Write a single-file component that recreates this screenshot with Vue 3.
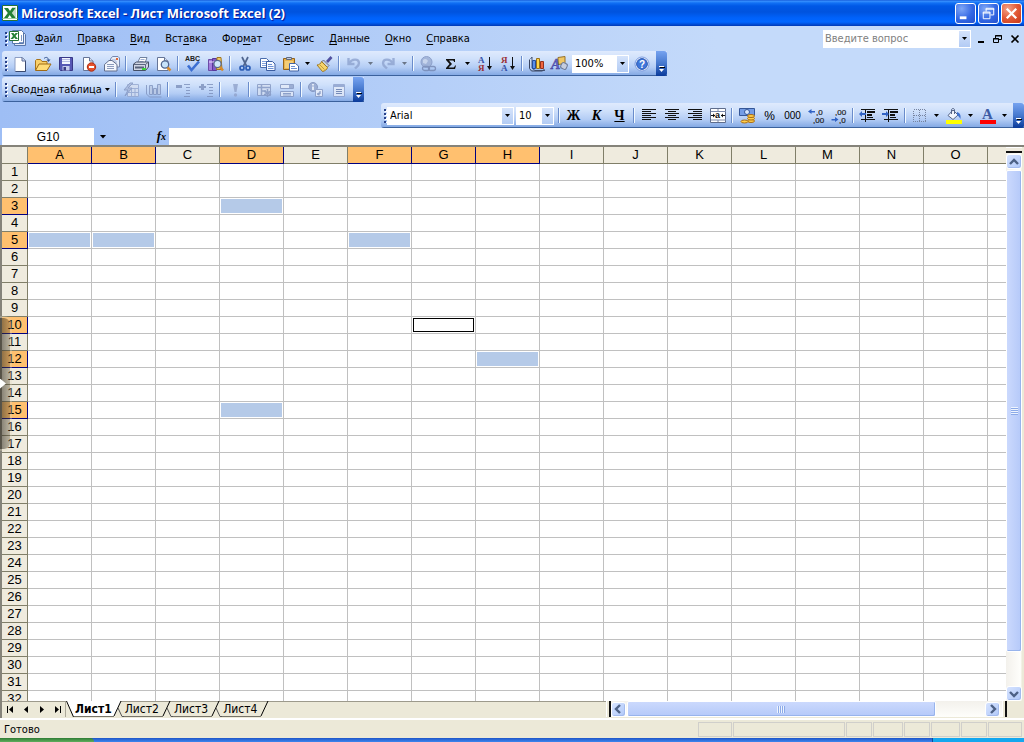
<script setup>
import { ref } from 'vue'

const icons = {
  page: '<path d="M3 1.500h7l3.500 3.500v10.500H3z" fill="#fff" stroke="#8d9ec4"/><path d="M10 1.500l3.500 3.500v10.500H3.500" fill="none" stroke="#39496f"/><path d="M10 1.500V5h3.500" fill="#cdd9f2" stroke="#5c6d98"/>',
  open: '<path d="M0.500 14V4.500l1-1h4l1.500 2h5V8" fill="#f8d06a" stroke="#a8741c"/><path d="M0.500 14.500L4 8h12l-4 6.500z" fill="#ffdc78" stroke="#a06a14"/><path d="M9 2.500c2-2 4-1 4.500 1" fill="none" stroke="#33528e"/><path d="M11.500 3.500h4L13.500 6z" fill="#33528e"/>',
  save: '<path d="M1.500 1.500h13v13h-12l-1-1z" fill="#5657b4" stroke="#383887"/><path d="M4 2h8v6H4z" fill="#f2f4ff"/><path d="M4 3.500h8M4 5.500h8" stroke="#b5bce3"/><path d="M4.500 10h7v4.500h-7z" fill="#c4cbec"/><path d="M5.500 11h2.500v3.500H5.500z" fill="#393b84"/>',
  perm: '<path d="M2.500 1.500h6l3.500 3.500v9.500H2.500z" fill="#fff" stroke="#667597"/><path d="M8.500 1.500V5H12" fill="#d7e1f4" stroke="#667597"/><circle cx="10.500" cy="11" r="4.200" fill="#e5502c" stroke="#a92c12"/><path d="M8 10h5v2H8z" fill="#fff"/>',
  mail: '<path d="M6.500 7V3l2-2.500h5.500l1.500 1.500v9h-9" fill="#e8eef9" stroke="#7587af"/><path d="M8 4h4M8 6h5" stroke="#9baed4"/><path d="M12 2h2v2h-2z" fill="#e36432"/><path d="M0.500 8.500L5 4.500h3l5 4v6.500H.5z" fill="#f4f7fd" stroke="#626f8d"/><path d="M3 8.500h7M3 10.500h7M3 12.500h7" stroke="#8d9cbd"/>',
  print: '<path d="M4.500 7L7 1.500h7L12 7" fill="#fff" stroke="#71829f"/><path d="M7.500 3.500h4M6.500 5.500h4" stroke="#9fb0d2"/><path d="M0.500 8l3-2h12v5l-3 3.500H.5z" fill="#d0d6e4" stroke="#454f65"/><path d="M.5 8.500h12l3-2.500M12.500 8.500v6" fill="none" stroke="#5c667e"/><path d="M2 11.500h9" stroke="#58637b" stroke-width="2"/><path d="M9 12h4v2H9z" fill="#3ad43a"/>',
  preview: '<path d="M1.500 1.500h7l3.500 3.500v9.500H1.500z" fill="#fff" stroke="#667597"/><path d="M8.500 1.500V5H12" fill="#d7e1f4" stroke="#667597"/><circle cx="9" cy="8.500" r="3.700" fill="#c7e3fa" stroke="#50658e" stroke-width="1.300"/><path d="M11.500 11.500l3 3" stroke="#d98c2c" stroke-width="2.500"/>',
  spell: '<text x="0" y="5" font-size="7" font-family="Liberation Sans" font-weight="bold" fill="#222">ABC</text><path d="M3 9.500l3.500 4.500L14 5.500" fill="none" stroke="#3c6fd2" stroke-width="2.600"/>',
  research: '<path d="M.5 3.500h4v11h-4z" fill="#a37cdb" stroke="#6c4ba7"/><path d="M4.500 2.500h4v12h-4z" fill="#8458c8" stroke="#57379a"/><path d="M1 6h7" stroke="#eadfff"/><path d="M9 1.500h4l1 12H8.500z" fill="#f0cb62" stroke="#9f7624"/><circle cx="9.500" cy="8" r="3.600" fill="#cfe7fb" stroke="#56698d" stroke-width="1.200"/><path d="M12 11l3 3.500" stroke="#d98c2c" stroke-width="2.500"/>',
  cut: '<path d="M5 1l4.500 9M11 1L6.500 10" stroke="#51668f" stroke-width="1.700" fill="none"/><circle cx="5" cy="12" r="2" fill="none" stroke="#2c5db5" stroke-width="1.700"/><circle cx="11" cy="12" r="2" fill="none" stroke="#2c5db5" stroke-width="1.700"/>',
  copy: '<path d="M.5 2.500h6l2.500 2.500v6.500H.5z" fill="#fff" stroke="#4a6dad"/><path d="M2 5.500h5M2 7.500h4M2 9.500h4" stroke="#7fa0dc"/><path d="M6.500 5.500h6l2.500 2.500v6.500H6.500z" fill="#f7faff" stroke="#3a5da1"/><path d="M8 8.500h4M8 10.500h5.500M8 12.500h5.500" stroke="#6b90d4"/>',
  paste: '<path d="M.5 2.500h11v11H.5z" fill="#eab44c" stroke="#94631b"/><path d="M3.500 3.500v-2h5v2z" fill="#c7cdd9" stroke="#606b80"/><path d="M2 5h8v7H2z" fill="#f3cd78"/><path d="M6.500 7.500h6l3 2.500v5h-9z" fill="#fff" stroke="#4264a5"/><path d="M8 10.500h4M8 12.500h6" stroke="#6b90d4"/>',
  brush: '<path d="M10 6L14.500 1" stroke="#50509f" stroke-width="2.700"/><path d="M6.500 4l5.500 5.500-2 2L4.500 6z" fill="#c6cede" stroke="#69718a"/><path d="M4.500 5.500l6 6c-.5 2-2.500 3.500-5 4L0 9c2 0 4-1.500 4.500-3.500z" fill="#f4d36b" stroke="#a07922"/><path d="M3 9l4.500 4.500" stroke="#c79b36"/>',
  undo: '<path d="M2.500 2v6h6" fill="none" stroke="#8ea3cf" stroke-width="2.400"/><path d="M3.500 7c2-4 9-5 9.500 0 0 3-2 3.500-4 5.500" fill="none" stroke="#8ea3cf" stroke-width="2.400"/>',
  redo: '<path d="M13.500 2v6h-6" fill="none" stroke="#8ea3cf" stroke-width="2.400"/><path d="M12.500 7c-2-4-9-5-9.500 0 0 3 2 3.500 4 5.500" fill="none" stroke="#8ea3cf" stroke-width="2.400"/>',
  link: '<circle cx="6.500" cy="6" r="5.500" fill="#9aacd2" stroke="#7f92bf"/><path d="M3 4c2-2 4-1 5 1l-2 3-3-1z" fill="#c8d4ea"/><rect x="2.500" y="10.500" width="7" height="4" rx="2" fill="none" stroke="#7486b1" stroke-width="1.300"/><rect x="8.500" y="10.500" width="7" height="4" rx="2" fill="none" stroke="#7486b1" stroke-width="1.300"/>',
  sum: '<path d="M3 3h9v3h-1c0-1-.5-1.500-1.500-1.500H6L9 8l-3.500 3.500h4.500c1 0 1.500-.5 2-2h1L12 13H3v-1L6.500 8 3 4z" fill="#111"/>',
  asc: '<text x="1" y="7" font-size="9" font-family="Liberation Serif" font-weight="bold" fill="#3552a8">А</text><text x="1" y="15" font-size="9" font-family="Liberation Serif" font-weight="bold" fill="#9c2f35">Я</text><path d="M12.500 1v12" stroke="#111"/><path d="M10 10h5L12.500 14z" fill="#111"/>',
  desc: '<text x="1" y="7" font-size="9" font-family="Liberation Serif" font-weight="bold" fill="#9c2f35">Я</text><text x="1" y="15" font-size="9" font-family="Liberation Serif" font-weight="bold" fill="#3552a8">А</text><path d="M12.500 1v12" stroke="#111"/><path d="M10 10h5L12.500 14z" fill="#111"/>',
  chart: '<path d="M1.500 3l1.500-2v11l3 2.500h10" fill="none" stroke="#4a5878"/><path d="M.5 3.500v9l2 2.500h11l2-2" fill="none" stroke="#38445f"/><path d="M3.500 4.500h3v8h-3z" fill="#5a8ee8" stroke="#244e9d"/><path d="M7.500 2.500h3v10h-3z" fill="#ffd648" stroke="#98701a"/><path d="M11.500 5.500h3v7h-3z" fill="#ee6540" stroke="#96301c"/>',
  draw: '<path d="M6 1.500l7-1v7l-7 1z" fill="#f0c765" stroke="#96712b"/><text x="-1" y="13" font-size="14" font-style="italic" font-family="Liberation Serif" font-weight="bold" fill="#6262c6" stroke="#3a3a91" stroke-width=".4">A</text><rect x="9" y="7" width="6" height="6" rx="2" transform="rotate(25 12 10)" fill="#c5cddf" stroke="#6b7896"/>',
  help: '<circle cx="8" cy="8" r="7" fill="#fff" stroke="#7a9be0"/><circle cx="8" cy="8" r="5.400" fill="#3f76d9" stroke="#2857b4"/><text x="5" y="12" font-size="10" font-family="Liberation Sans" font-weight="bold" fill="#fff">?</text>',
  format: '<g fill="none" stroke="#95a7cf"><path d="M4.500 2.500h11v12h-11z" fill="#d5def0"/><path d="M5 6.500h10M5 10.500h10M8.500 6v8M12 6v8"/></g><path d="M7 1L1 8h4l-3 6 7-8H5l5-5z" fill="#a8b7d9" stroke="#8092bd"/>',
  chartGray: '<g fill="#bac8e3" stroke="#7f92bd"><path d="M.5 3v9l3 3h12" fill="none"/><path d="M3.500 3.500h3v9h-3zM7.500 6.500h3v6h-3zM11.500 2.500h3v10h-3z"/></g>',
  hide: '<g shape-rendering="crispEdges" fill="#7d90bb"><path d="M1 3h6v3H1zM9 2h6v1H9zM11 5h4v1h-4zM11 8h4v1h-4zM11 11h4v1h-4zM9 14h6v1H9z"/></g>',
  show: '<g shape-rendering="crispEdges" fill="#7d90bb"><path d="M1 4h7v2H1zM3 2h3v6H3zM9 2h6v1H9zM11 5h4v1h-4zM11 8h4v1h-4zM11 11h4v1h-4zM9 14h6v1H9z"/></g>',
  bang: '<path d="M6 2h5L9.500 10h-2z" fill="#91a3cb"/><circle cx="8.500" cy="13" r="1.700" fill="#91a3cb"/>',
  pivot: '<g fill="none" stroke="#8396c0"><path d="M1.500 2.500h13v11h-13z" fill="#d7e1f2"/><path d="M1 5.500h14M5.500 3v11M6 9h4" stroke-width="1.500"/><path d="M11.500 7v8M8 9l7 4M15 9l-7 4" stroke-width="1.600"/></g>',
  fields: '<path d="M1.500 2.500h13v4h-13zM1.500 9.500h13v5h-13z" fill="#e6ecf8" stroke="#8294bf"/><path d="M10 3h4v3h-4z" fill="#91a3cb"/><path d="M4 11.500h8M4 13h8" stroke="#8294bf"/>',
  info: '<circle cx="5" cy="5" r="4.500" fill="#91a3cb" stroke="#7789b5"/><path d="M5 2v1.500M5 4.500V8" stroke="#fff" stroke-width="1.600"/><path d="M7.500 7.500h7v7h-7z" fill="#edf1fa" stroke="#8798c1"/><path d="M12 9v3H9.500m1.500-1.500L9.500 12l1.500 1.500" fill="none" stroke="#667bab"/>',
  list: '<path d="M2.500 2.500h11v12h-11z" fill="#e6ecf8" stroke="#8da0cb"/><path d="M3 4h10" stroke="#8da0cb" stroke-width="2"/><path d="M5 7.500h6M5 9.500h6M5 11.500h6" stroke="#667aa8"/>',
  left: '<path shape-rendering="crispEdges" fill="#111" d="M1 1h14v1H1zM1 3h9v1H1zM1 5h14v1H1zM1 7h9v1H1zM1 9h14v1H1zM1 11h9v1H1z"/>',
  center: '<path shape-rendering="crispEdges" fill="#111" d="M1 1h14v1H1zM4 3h8v1H4zM1 5h14v1H1zM4 7h8v1H4zM1 9h14v1H1zM4 11h8v1H4z"/>',
  right: '<path shape-rendering="crispEdges" fill="#111" d="M1 1h14v1H1zM6 3h9v1H6zM1 5h14v1H1zM6 7h9v1H6zM1 9h14v1H1zM6 11h9v1H6z"/>',
  merge: '<path d="M.5.5h15v14H.5z" fill="#fff" stroke="#5f6d8c"/><path d="M1 3.500h15M1 12h15M8 1v2M8 12v2" stroke="#7c8aaa"/><text x="5" y="10" font-size="9" font-family="Liberation Sans" font-weight="bold" fill="#111">a</text><path d="M1 7.500h4M11 7.500h4" stroke="#111"/><path d="M3 5.500l2 2-2 2zM13 5.500l-2 2 2 2z" fill="#111"/>',
  money: '<path d="M.5.5h15v7H.5z" fill="#739ce6" stroke="#355798"/><circle cx="8" cy="4" r="2.500" fill="#d7e6ff" stroke="#355798"/><g fill="#ffcf4a" stroke="#a86b15"><ellipse cx="12" cy="13" rx="3.500" ry="1.500"/><ellipse cx="12" cy="10.500" rx="3.500" ry="1.500"/><ellipse cx="12" cy="8" rx="3.500" ry="1.500"/><ellipse cx="5.500" cy="13.500" rx="3.500" ry="1.500"/></g>',
  incDec: '<path d="M0 3.500L3.500 1v2H7v1.500H3.500V6z" fill="#3163c5"/><text x="8" y="7" font-size="8" font-family="Liberation Sans" fill="#222" stroke="#222" stroke-width=".2">,0</text><text x="5" y="15" font-size="8" font-family="Liberation Sans" fill="#222" stroke="#222" stroke-width=".2">,00</text>',
  decDec: '<path d="M7.500 11.500L4 9v2H.5v1.500H4V14z" fill="#3163c5"/><text x="4" y="7" font-size="8" font-family="Liberation Sans" fill="#222" stroke="#222" stroke-width=".2">,00</text><text x="8" y="15" font-size="8" font-family="Liberation Sans" fill="#222" stroke="#222" stroke-width=".2">,0</text>',
  outdent: '<path shape-rendering="crispEdges" fill="#111" d="M1 1h14v1H1zM7 3h8v2H7zM7 6h5v2H7zM7 9h6v1H7zM1 11h14v1H1zM5 1h1v13H5z"/><path d="M-1 6l3-3v2h4v2H2v2z" fill="#3163c5"/>',
  indent: '<path shape-rendering="crispEdges" fill="#111" d="M1 1h14v1H1zM7 3h8v2H7zM7 6h5v2H7zM7 9h6v1H7zM1 11h14v1H1zM5 1h1v13H5z"/><path d="M6 6L3 3v2H-1v2h4v2z" fill="#3163c5"/>',
  borders: '<path d="M1.500 1.500h12v12h-12zM7.500 2v12M2 7.500h12" fill="none" stroke="#76839f" stroke-dasharray="1 1" shape-rendering="crispEdges"/>',
  fill: '<path d="M7 2l5 5-5 4.500-5-4z" fill="#f1f5fd" stroke="#556487"/><path d="M5.500 6V2c0-2 3-2 3 0v4" fill="none" stroke="#556487"/><path d="M11 4c3 1 4 3 3.500 7-1-2-2-3-3.500-4z" fill="#3c6fce"/><path d="M0 12h16v4H0z" fill="#ff0"/>',
  color: '<text x="2" y="11" font-size="15" font-family="Liberation Serif" font-weight="bold" fill="#3d5ca4">A</text><path d="M0 12h16v4H0z" fill="#f00"/>',
  app: '<path d="M.5.5h15v15H.5z" fill="#fff" stroke="#277237"/><path d="M10 3h4M10 5h4M10 7h4M10 9h4M10 11h4" stroke="#8ebc90"/><path d="M2 3h4l2 3 2-3h3.500L9.800 8l4 5H9.700L7.700 10l-2 3H2l3.800-5z" fill="#258236"/><path d="M.5 13.500h15" stroke="#9fd09f"/>',
  book: '<path d="M5.500 2.500h9l2 2v11h-11z" fill="#e4ebf8" stroke="#5776aa"/><path d="M3.500.5h9l2 2v11h-11z" fill="#fff" stroke="#5776aa"/><path d="M12.500 5v6M10 12.500h4" stroke="#7b98c8"/><path d="M.5 1.500h9v9h-9z" fill="#fff" stroke="#277237"/><path d="M2 3h2.500l1 1.500 1-1.500H9L6.500 6 9 9H6.500L5.300 7.500 4 9H1.500L4 6z" fill="#258236"/>'
}

const b = (icon, label, off = false) => ({ t: 'b', icon, label, off })
const tx = (text, label, cls = '') => ({ t: 'x', text, label, cls })
const s = { t: 's' }
const a = (label, off = false) => ({ t: 'a', label, off })
const standard = [
  b('page', 'Создать'), b('open', 'Открыть'), b('save', 'Сохранить'), b('perm', 'Разрешения'), b('mail', 'Сообщение'), s,
  b('print', 'Печать'), b('preview', 'Предварительный просмотр'), s, b('spell', 'Орфография'), b('research', 'Справочные материалы'), s,
  b('cut', 'Вырезать'), b('copy', 'Копировать'), b('paste', 'Вставить'), a('Параметры вставки'), b('brush', 'Формат по образцу'), s,
  b('undo', 'Отменить', true), a('Список отмены', true), b('redo', 'Вернуть', true), a('Список возврата', true), s,
  b('link', 'Гиперссылка', true), b('sum', 'Автосумма'), a('Функции'), b('asc', 'По возрастанию'), b('desc', 'По убыванию'), s,
  b('chart', 'Мастер диаграмм'), b('draw', 'Рисование')
]
const pivot = [
  s, b('format', 'Формат отчета', true), b('chartGray', 'Диаграмма', true), s, b('hide', 'Скрыть детали', true), b('show', 'Отобразить детали', true), s,
  b('bang', 'Обновить данные', true), s, b('pivot', 'Скрытые элементы', true), b('fields', 'Отображать элементы', true), s,
  b('info', 'Параметры поля', true), b('list', 'Список полей', true)
]
const formatting = [
  s, tx('Ж', 'Полужирный', 'bold'), tx('К', 'Курсив', 'bold italic'), tx('Ч', 'Подчеркнутый', 'bold under'), s,
  b('left', 'По левому краю'), b('center', 'По центру'), b('right', 'По правому краю'), b('merge', 'Объединить'), s,
  b('money', 'Денежный формат'), tx('%', 'Процентный формат', 'num'), tx('000', 'Формат с разделителями', 'num small'),
  b('incDec', 'Увеличить разрядность'), b('decDec', 'Уменьшить разрядность'), s,
  b('outdent', 'Уменьшить отступ'), b('indent', 'Увеличить отступ'), s,
  b('borders', 'Границы'), a('Виды границ'), b('fill', 'Цвет заливки'), a('Палитра заливки'), b('color', 'Цвет шрифта'), a('Палитра шрифта')
]

const menu = [['', 'Ф', 'айл'], ['', 'П', 'равка'], ['', 'В', 'ид'], ['Вст', 'а', 'вка'], ['Фор', 'м', 'ат'], ['С', 'е', 'рвис'], ['', 'Д', 'анные'], ['', 'О', 'кно'], ['', 'С', 'правка']]
// The last column is a partial one and carries no letter.
const columns = [...'ABCDEFGHIJKLMNO', '']
const rows = Array.from({ length: 32 }, (_, i) => i + 1)
const selected = ['A5', 'B5', 'D3', 'F5', 'G10', 'H12', 'D15']
const active = 'G10'
const colOn = (c) => selected.some((k) => k[0] === c)
const rowOn = (r) => selected.some((k) => Number(k.slice(1)) === r)
const navs = [
  ['Первый лист', 'M1 0h1v7H1zM7 0v7L3 3.500z'],
  ['Предыдущий лист', 'M6 0v7L2 3.500z'],
  ['Следующий лист', 'M2 0v7l4-3.500z'],
  ['Последний лист', 'M6 0h1v7H6zM1 0v7l4-3.500z']
]
const sheets = ['Лист1', 'Лист2', 'Лист3', 'Лист4']
const current = ref('Лист1')
const font = ref('Arial')
const size = ref('10')
const zoom = ref('100%')
const question = ref('')
const formula = ref('')
const cellName = ref(active)
</script>

<template>
  <div class="window">
    <header class="title">
      <svg class="ico" viewBox="0 0 16 16" v-html="icons.app"></svg>
      <h1>Microsoft Excel - Лист Microsoft Excel (2)</h1>
      <button class="win" aria-label="Свернуть"><svg viewBox="0 0 20 20"><path d="M4 13h7v3H4z" fill="#fff" /></svg></button>
      <button class="win" aria-label="Восстановить"><svg viewBox="0 0 20 20" fill="none" stroke="#fff"><path d="M7.500 8V4.500h8v7H12M7 5.500h9" /><path d="M4.500 8.500h7v7h-7zM4 9.500h8" /></svg></button>
      <button class="win close" aria-label="Закрыть"><svg viewBox="0 0 20 20"><path d="M5 5l10 10M15 5L5 15" stroke="#fff" stroke-width="2.400" /></svg></button>
    </header>

    <div class="bars">
      <nav class="menu">
        <i class="grip"></i>
        <svg class="book" viewBox="0 0 18 17" v-html="icons.book"></svg>
        <button v-for="m in menu" :key="m.join('')" class="item">{{ m[0] }}<u>{{ m[1] }}</u>{{ m[2] }}</button>
        <div class="ask">
          <input v-model="question" aria-label="Введите вопрос" placeholder="Введите вопрос">
          <button class="drop" aria-label="Список вопросов"><i class="tri"></i></button>
        </div>
        <button class="mini" aria-label="Свернуть книгу"><svg viewBox="0 0 10 10"><path d="M2 7h6v2H2z" /></svg></button>
        <button class="mini" aria-label="Восстановить книгу"><svg viewBox="0 0 10 10" fill="none" stroke="#000"><path d="M3.500 4V1.500h6v4H7M3 2h7" /><path d="M1.500 4.500h5v4h-5zM1 5h6" /></svg></button>
        <button class="mini" aria-label="Закрыть книгу"><svg viewBox="0 0 10 10"><path d="M1.500 1.500l7 7M8.500 1.500l-7 7" stroke="#000" stroke-width="1.700" /></svg></button>
      </nav>

      <div class="toolbar">
        <i class="grip"></i>
        <template v-for="(t, n) in standard" :key="n">
          <i v-if="t.t === 's'" class="sep"></i>
          <button v-else-if="t.t === 'a'" class="more" :class="{ off: t.off }" :aria-label="t.label"><i class="tri"></i></button>
          <button v-else class="tool" :aria-label="t.label" :disabled="t.off"><svg viewBox="0 0 16 16" v-html="icons[t.icon]"></svg></button>
        </template>
        <div class="combo zoom">
          <select v-model="zoom" aria-label="Масштаб"><option>100%</option></select>
          <span class="drop"><i class="tri"></i></span>
        </div>
        <button class="tool" aria-label="Справка"><svg viewBox="0 0 16 16" v-html="icons.help"></svg></button>
        <button class="cap" aria-label="Параметры панели"><i></i><i class="tri"></i></button>
      </div>

      <div class="toolbar">
        <i class="grip"></i>
        <button class="pivot"><span>Свод<u>н</u>ая таблица</span><i class="tri"></i></button>
        <template v-for="(t, n) in pivot" :key="n">
          <i v-if="t.t === 's'" class="sep"></i>
          <button v-else class="tool" :aria-label="t.label" disabled><svg viewBox="0 0 16 16" v-html="icons[t.icon]"></svg></button>
        </template>
        <button class="cap" aria-label="Параметры панели"><i></i><i class="tri"></i></button>
      </div>

      <div class="toolbar end">
        <i class="grip"></i>
        <div class="combo font">
          <select v-model="font" aria-label="Шрифт"><option>Arial</option></select>
          <span class="drop"><i class="tri"></i></span>
        </div>
        <div class="combo size">
          <select v-model="size" aria-label="Размер"><option>10</option></select>
          <span class="drop"><i class="tri"></i></span>
        </div>
        <template v-for="(t, n) in formatting" :key="n">
          <i v-if="t.t === 's'" class="sep"></i>
          <button v-else-if="t.t === 'a'" class="more" :aria-label="t.label"><i class="tri"></i></button>
          <button v-else-if="t.t === 'x'" class="tool" :class="t.cls" :aria-label="t.label">{{ t.text }}</button>
          <button v-else class="tool" :aria-label="t.label"><svg viewBox="0 0 16 16" v-html="icons[t.icon]"></svg></button>
        </template>
        <button class="cap" aria-label="Параметры панели"><i></i><i class="tri"></i></button>
      </div>

      <div class="formula">
        <input v-model="cellName" class="name" aria-label="Имя ячейки">
        <button class="namedrop" aria-label="Список имен"><i class="tri big"></i></button>
        <button class="fx" aria-label="Вставить функцию">f<small>x</small></button>
        <input v-model="formula" class="line" aria-label="Строка формул">
      </div>
    </div>

    <main class="sheet">
      <div class="grid">
        <table>
          <colgroup><col class="rowcol"><col v-for="c in columns" :key="c" class="datacol"></colgroup>
          <thead>
            <tr><th></th><th v-for="c in columns" :key="c" scope="col" :class="{ on: colOn(c) }">{{ c }}</th></tr>
          </thead>
          <tbody>
            <tr v-for="r in rows" :key="r">
              <th scope="row" :class="{ on: rowOn(r) }">{{ r }}</th>
              <td v-for="c in columns" :key="c"><div v-if="selected.includes(c + r)" :class="c + r === active ? 'active' : 'picked'"></div></td>
            </tr>
          </tbody>
        </table>
      </div>
      <div class="vscroll">
        <i class="split"></i>
        <button class="arrow" aria-label="Вверх"><svg viewBox="0 0 14 14"><path d="M3 9l4-4 4 4" /></svg></button>
        <div class="thumb"><i></i></div>
        <button class="arrow last" aria-label="Вниз"><svg viewBox="0 0 14 14"><path d="M3 5l4 4 4-4" /></svg></button>
      </div>
      <button class="drawer" aria-label="Показать панель"><i></i></button>
    </main>

    <div class="bottom">
      <div class="tabs">
        <div class="navs">
          <button v-for="n in navs" :key="n[0]" :aria-label="n[0]"><svg viewBox="0 0 8 7"><path :d="n[1]" /></svg></button>
        </div>
        <svg class="edge first" viewBox="0 0 8 16"><path d="M0 0h8v16z" fill="#fff" /><path d="M.5 0l7 16" stroke="#000" fill="none" /></svg>
        <template v-for="(n, k) in sheets" :key="n">
          <button class="tab" :class="{ current: current === n }" @click="current = n">{{ n }}</button>
          <svg class="edge" viewBox="0 0 12 16"><path v-if="current === n" d="M0 0h9L2 16H0z" fill="#fff" /><path d="M9 0L2 15" stroke="#000" fill="none" /><path v-if="k < 3" d="M6 7l4 8.500h2" stroke="#555" fill="none" /><path d="M0 15.500h2" stroke="#77746a" /></svg>
        </template>
      </div>
      <i class="hsplit"></i>
      <div class="hscroll">
        <button class="arrow" aria-label="Влево"><svg viewBox="0 0 14 14"><path d="M9 3L5 7l4 4" /></svg></button>
        <div class="thumb"><i></i></div>
        <button class="arrow last" aria-label="Вправо"><svg viewBox="0 0 14 14"><path d="M5 3l4 4-4 4" /></svg></button>
      </div>
      <i class="hsplit"></i>
      <i class="corner"></i>
    </div>

    <footer class="status">
      <span>Готово</span>
      <i class="p34"></i><i class="p112"></i><i class="p26"></i><i class="p30"></i><i class="p26"></i><i class="p29"></i><i class="p26"></i><i class="p34"></i>
    </footer>
    <div class="taskbar"><i class="start"></i><i class="tray"></i></div>
  </div>
</template>

<style>
body { margin: 0; overflow: hidden; }
</style>

<style scoped>
* { box-sizing: border-box; }
.window { height: 100vh; display: flex; flex-direction: column; overflow: hidden; background: #ece9d8; color: #000; font: 11px/14px "DejaVu Sans Condensed", "Noto Sans", sans-serif; }
button, input, select { font: inherit; color: inherit; margin: 0; padding: 0; border: 0; background: none; border-radius: 0; outline: 0; }
button { display: flex; align-items: center; justify-content: center; flex: none; }
i { display: block; flex: none; }
u { text-underline-offset: 2px; }
svg { display: block; flex: none; overflow: visible; }

.title { flex: none; height: 26px; display: flex; align-items: center; gap: 2px; padding: 0 2px; background: linear-gradient(#0a4bd0 0, #3a93ff 1px, #1170f4 3px, #0058e6 6px, #0053de 12px, #0062fb 18px, #0066ff 22px, #0050dc 24px, #0038b4 26px); }
.title .ico { width: 16px; height: 16px; }
.title h1 { flex: 1; margin: 0; padding-left: 1px; font: bold 13px/18px "Open Sans", sans-serif; color: #fff; text-shadow: 1px 1px 1px #0f1089; white-space: nowrap; overflow: hidden; }
.win { width: 21px; height: 21px; border: 1px solid #fff; border-radius: 3px; background: radial-gradient(circle at 30% 25%, #7ea6f6, #3468e4 55%, #2350cd); }
.win svg { width: 19px; height: 19px; }
.close { background: radial-gradient(circle at 30% 25%, #f3a189, #e25a37 50%, #c7371a); }

.bars { flex: none; background: linear-gradient(90deg, #9ebef5, #c4dafa 70%); }
.menu { height: 25px; display: flex; align-items: center; padding: 0 0 0 4px; }
.menu .grip { margin: 0 0 0 1px; }
.book { width: 18px; height: 17px; margin: 0 1px; }
.item { display: block; padding: 0 8px 0 7px; white-space: nowrap; }
.ask { display: flex; width: 148px; height: 18px; margin: 0 2px 0 auto; padding: 1px; background: #fff; }
.ask input { flex: 1; min-width: 0; padding: 0 1px; }
.ask input::placeholder { color: #808080; opacity: 1; }
.mini { width: 16px; height: 18px; }
.mini:last-child { width: 19px; }
.mini svg { width: 10px; height: 10px; }

.grip { width: 3px; height: 14px; background: repeating-linear-gradient(#27418a 0 2px, transparent 2px 4px) 0 0 / 2px 14px no-repeat, repeating-linear-gradient(#fff 0 2px, transparent 2px 4px) 1px 1px / 2px 13px no-repeat; }
.toolbar { display: flex; align-items: center; width: max-content; height: 25px; margin: 0 0 1px 2px; padding-left: 3px; border-radius: 3px 0 0 3px; background: linear-gradient(#dfeafd, #d0e1fb 30%, #b4cdf5 65%, #84a9e4 96%, #3b619c 97%); }
.toolbar.end { margin: 0 0 0 auto; }
.tool { width: 23px; height: 23px; }
.tool svg { width: 16px; height: 16px; }
.tool:disabled { opacity: .8; }
.more { width: 11px; height: 23px; }
.off { opacity: .45; }
.tri { width: 5px; height: 3px; background: #000; clip-path: polygon(0 0, 100% 0, 50% 100%); }
.tri.big { width: 7px; height: 4px; }
.sep { width: 2px; height: 15px; margin: 0 2px; border-left: 1px solid #6a8ccb; border-right: 1px solid #f1f9ff; }
.bold { font: bold 14px/16px "Liberation Serif", serif; }
.italic { font-style: italic; }
.under { text-decoration: underline; }
.num { font: 12px/16px "Liberation Sans", sans-serif; }
.small { font-size: 10px; }
.combo { position: relative; height: 18px; background: #fff; flex: none; }
.combo select { appearance: none; display: block; width: 100%; height: 18px; padding: 0 14px 0 3px; line-height: 18px; }
.combo .drop { position: absolute; right: 1px; top: 1px; pointer-events: none; }
.zoom { width: 57px; margin: 0 1px; }
.font { width: 127px; }
.size { width: 38px; margin: 0 2px; }
.drop { display: flex; align-items: center; justify-content: center; width: 11px; height: 16px; background: linear-gradient(#d5e3fb, #b2cbf4); }
.cap { flex-direction: column; justify-content: flex-end; align-self: stretch; gap: 2px; width: 11px; margin-left: 3px; padding-bottom: 4px; border-radius: 0 3px 3px 0; background: linear-gradient(#76a3f0, #4678ce 50%, #0a3a9a); }
.cap i { width: 5px; height: 1px; background: #fff; filter: drop-shadow(1px 1px 0 #000); }
.cap .tri { height: 3px; }
.pivot { width: 105px; gap: 3px; white-space: nowrap; }

.formula { display: flex; height: 17px; padding-left: 2px; }
.name { width: 92px; background: #fff; text-align: center; font: 12px/16px "Liberation Sans", sans-serif; }
.namedrop { width: 18px; }
.fx { display: block; width: 57px; padding-right: 3px; text-align: right; font: italic bold 13px/14px "Liberation Serif", serif; }
.fx small { font-size: 10px; }
.line { flex: 1; min-width: 0; background: #fff; padding: 0 3px; }

.sheet { position: relative; flex: 1; min-height: 0; display: flex; border-top: 2px solid #85837a; border-left: 2px solid #85837a; }
.grid { flex: 1; min-width: 0; overflow: hidden; background: #fff; }
table { table-layout: fixed; width: 0; border-collapse: separate; border-spacing: 0; font: 13px/16px "Liberation Sans", sans-serif; }
.rowcol { width: 26px; }
.datacol { width: 64px; }
tr { height: 17px; }
th { height: 17px; padding: 0; font-weight: normal; text-align: center; background: #efebde; border: solid #807e68; border-width: 0 1px 1px 0; }
th.on { background: #ffc06f; border-color: #000080; }
td { height: 17px; padding: 1px; border: solid #c0c0c0; border-width: 0 1px 1px 0; }
.picked { height: 14px; background: #b5cae8; }
.active { height: 14px; border: 1px solid #000; }

.arrow { width: 15px; height: 15px; border: 1px solid #fff; border-radius: 3px; background: linear-gradient(135deg, #d6e3ff, #b0c8f8); box-shadow: inset -1px -1px #a3bbee; }
.arrow svg { width: 14px; height: 14px; fill: none; stroke: #4d6185; stroke-width: 2.4; }
.last { margin-top: auto; }
.vscroll { flex: none; width: 18px; display: flex; flex-direction: column; padding-right: 2px; background: linear-gradient(90deg, #f3f1ec, #fefefb 80%, #ece9d8 90%); }
.split { height: 6px; margin-bottom: 1px; background: #efebde; border-top: 1px solid #fff; border-bottom: 2px solid #111; }
.vscroll .arrow { width: 16px; }
.thumb { display: flex; align-items: center; justify-content: center; border: 1px solid #fff; border-radius: 2px; background: #c6d5fc; box-shadow: inset -1px -1px #98b4ec; }
.vscroll .thumb { height: 87%; margin-top: 1px; background: linear-gradient(90deg, #cbd9fd, #b5c9f9); }
.vscroll .thumb i { width: 7px; height: 8px; background: repeating-linear-gradient(#eef4fe 0 1px, #8caae8 1px 2px); }
.drawer { position: absolute; left: -2px; top: 169px; width: 12px; height: 135px; justify-content: flex-start; border: 2px solid rgba(225, 215, 190, .3); border-left: 0; border-radius: 0 8px 8px 0; background: linear-gradient(90deg, rgba(50, 45, 35, .6), rgba(90, 75, 45, .35)); background-clip: padding-box; }
.drawer i { width: 6px; height: 10px; background: #fff; clip-path: polygon(0 0, 100% 50%, 0 100%); }

.bottom { flex: none; height: 17px; display: flex; border-left: 2px solid #85837a; }
.tabs { flex: 1; display: flex; height: 16px; min-width: 0; border-top: 1px solid #9d9a8c; }
.navs { display: flex; width: 64px; border-right: 1px solid #aca899; }
.navs button { width: 16px; }
.navs svg { width: 8px; height: 7px; }
.tab { height: 16px; margin-top: -1px; padding: 0 2px 0 1px; border-bottom: 1px solid #77746a; font-size: 12px; }
.tab.current { padding: 0 0 0 1px; background: #fff; font-weight: bold; }
.edge { width: 12px; height: 16px; margin-top: -1px; }
.edge.first { width: 8px; }
.hsplit { width: 5px; height: 16px; background: #ece9d8; border-left: 1px solid #fff; border-right: 2px solid #111; }
.hscroll { width: 38.3%; height: 16px; display: flex; align-items: center; background: linear-gradient(#f3f1ec, #fefefb); }
.hscroll .thumb { width: 79%; height: 16px; margin-left: 1px; background: linear-gradient(#cbd9fd, #b5c9f9); }
.hscroll .thumb i { width: 8px; height: 7px; background: repeating-linear-gradient(90deg, #eef4fe 0 1px, #8caae8 1px 2px); }
.hscroll .last { margin: 0 2px 0 auto; }
.corner { width: 17px; }

.status { flex: none; height: 20px; display: flex; align-items: center; gap: 1px; padding: 0 2px 0 4px; border-top: 2px solid #fff; }
.status span { flex: 1; padding-top: 2px; }
.status i { height: 15px; border: 1px solid #d0cfcb; }
.p34 { width: 34px; } .p112 { width: 112px; } .p26 { width: 26px; } .p30 { width: 30px; } .p29 { width: 29px; }
.taskbar { flex: none; height: 4px; display: flex; justify-content: space-between; background: linear-gradient(#1f55c8, #3d86ee); }
.start { width: 94px; background: linear-gradient(#2f7c34, #5fae5e); border-radius: 0 4px 0 0; }
.tray { width: 9%; background: #14a7ee; border-left: 1px solid #0c4b9c; }
</style>
